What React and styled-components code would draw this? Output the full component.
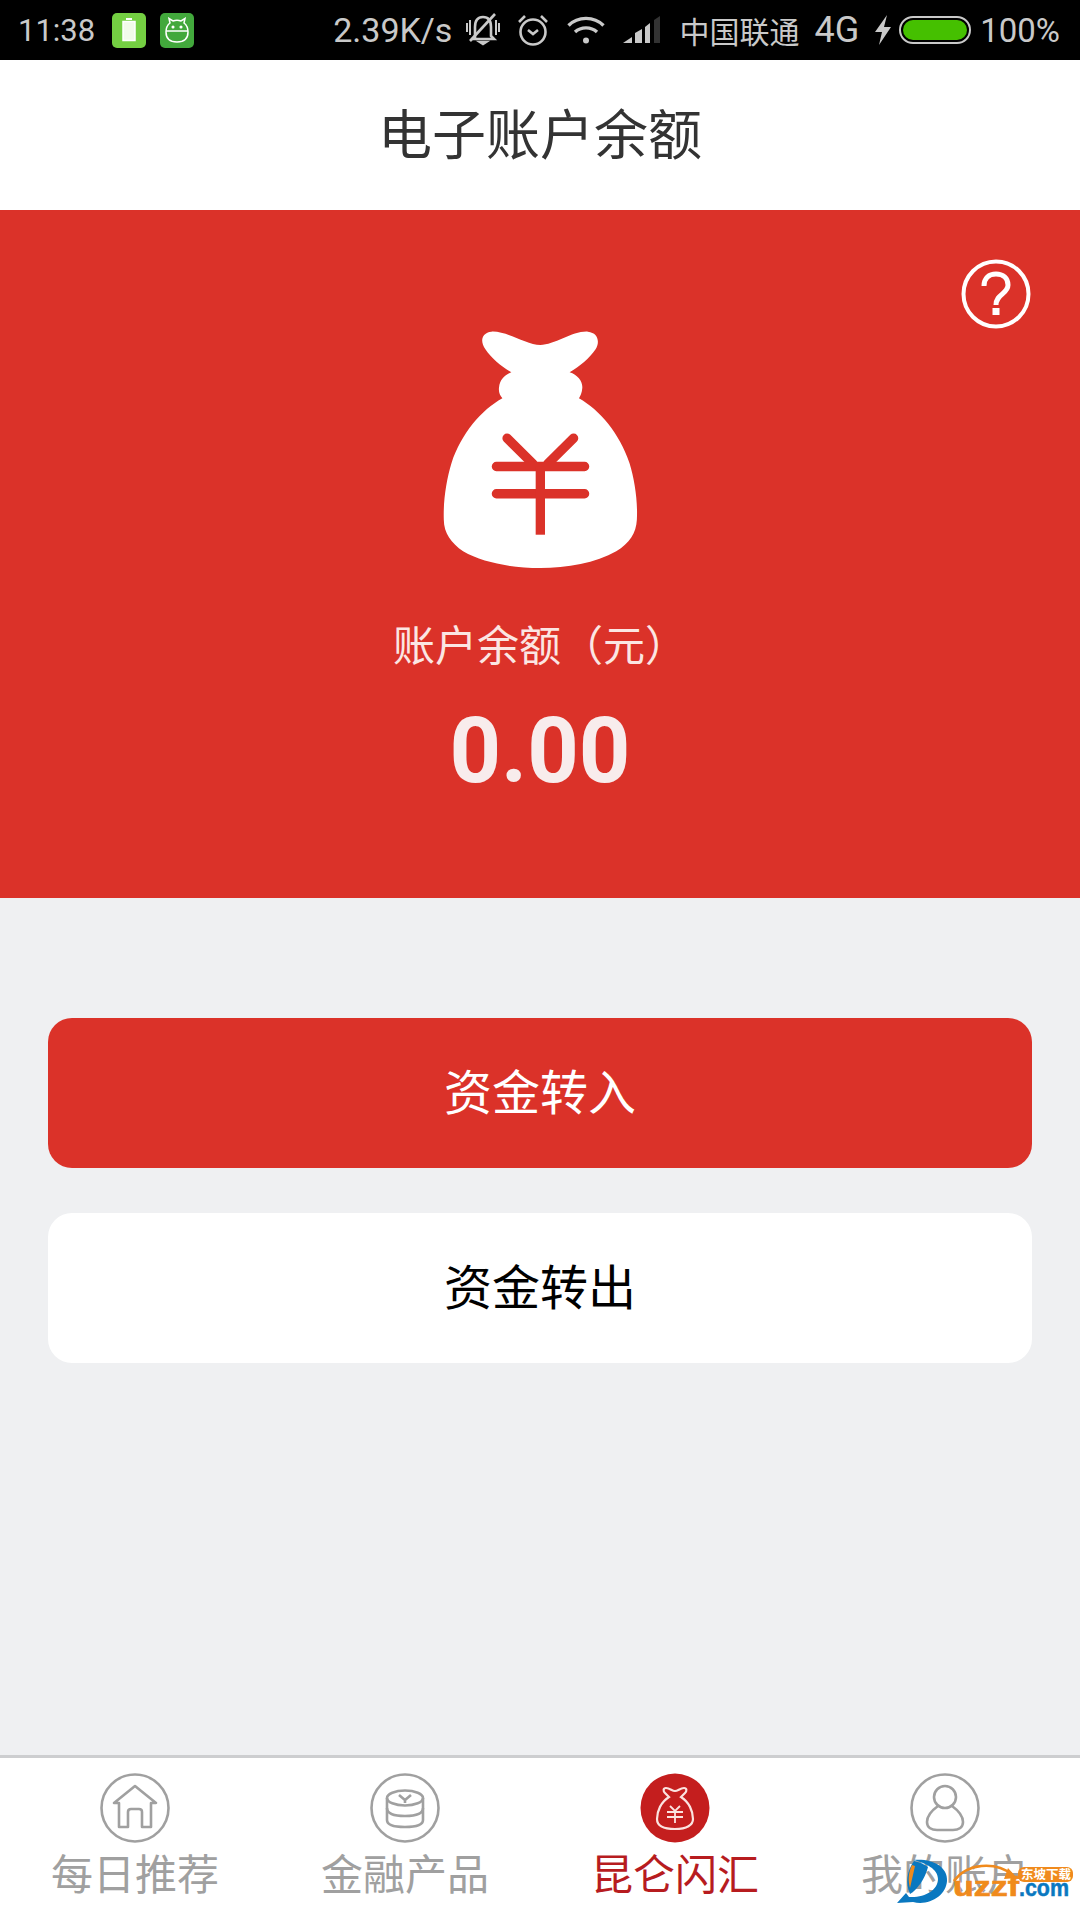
import React from "react";
import styled, { createGlobalStyle } from "styled-components";

const GlobalStyle = createGlobalStyle`
  html, body {
    margin: 0;
    padding: 0;
    background: #eff0f2;
    font-family: "Noto Sans CJK SC", "Roboto", sans-serif;
  }
  * { box-sizing: border-box; }
`;

const RED = "#db3229";
const GREY = "#a0a0a0";

const Page = styled.div`
  width: 1080px;
  height: 1920px;
  display: flex;
  flex-direction: column;
  position: relative;
  overflow: hidden;
  background: #eff0f2;
`;

/* status bar */
const StatusBar = styled.div`
  height: 60px;
  flex: none;
  background: #000;
  color: #c9c9c9;
  display: flex;
  align-items: center;
  padding-left: 18px;
  font-family: "Roboto", "Noto Sans CJK SC", sans-serif;
  font-weight: 400;
`;

const StatusText = styled.span`
  margin-left: ${(p) => p.$gap || 0}px;
  font-size: ${(p) => p.$size || 33}px;
  white-space: nowrap;
  line-height: 1;
`;

const CarrierText = styled(StatusText)`
  font-family: "Noto Sans CJK SC", sans-serif;
  font-size: 30px;
`;

const AppBadge = styled.div`
  width: 34px;
  height: 35px;
  margin-left: ${(p) => p.$gap}px;
  border-radius: 5px;
  background: ${(p) => p.$bg};
  display: flex;
  align-items: center;
  justify-content: center;
`;

const StatusIcon = styled.svg`
  flex: none;
  margin-left: ${(p) => p.$gap}px;
  display: block;
`;

/* title */
const Header = styled.header`
  height: 150px;
  flex: none;
  background: #fff;
  display: flex;
  align-items: center;
  justify-content: center;
  padding-bottom: 7px;
  font-size: 54px;
  color: #333;
`;

/* balance */
const Hero = styled.section`
  height: 688px;
  flex: none;
  background: ${RED};
  position: relative;
  display: flex;
  flex-direction: column;
  align-items: center;
  padding-top: 120px;
`;

const HelpButton = styled.svg`
  position: absolute;
  top: 49px;
  right: 49px;
`;

const BalanceLabel = styled.div`
  margin-top: 52px;
  font-size: 42px;
  line-height: 46px;
  color: #fbe6e3;
`;

const BalanceValue = styled.div`
  margin-top: 33px;
  font-family: "Roboto", sans-serif;
  font-weight: 700;
  font-size: 90px;
  line-height: 106px;
  color: #f8ecec;
`;

/* actions */
const Actions = styled.main`
  flex: 1;
  display: flex;
  flex-direction: column;
  gap: 45px;
  padding: 120px 48px 0;
`;

const ActionButton = styled.button`
  height: 150px;
  border: 0;
  border-radius: 24px;
  padding: 0 0 9px;
  font-family: inherit;
  font-size: 48px;
  background: ${(p) => (p.$primary ? RED : "#fff")};
  color: ${(p) => (p.$primary ? "#fff" : "#000")};
`;

/* bottom tabs */
const TabBar = styled.nav`
  height: 165px;
  flex: none;
  background: #fff;
  border-top: 3px solid #cdced0;
  display: grid;
  grid-template-columns: repeat(4, 1fr);
  padding-top: 15px;
`;

const Tab = styled.div`
  display: flex;
  flex-direction: column;
  align-items: center;
  color: ${(p) => (p.$active ? "#b71c1f" : GREY)};
`;

const TabLabel = styled.span`
  margin-top: 5px;
  font-size: 42px;
  line-height: 48px;
`;

const Watermark = styled.svg`
  position: absolute;
  left: 895px;
  top: 1855px;
`;

const BAG_PATH =
  "M215 65C260 62 320 105 362 105C405 105 460 62 505 65C535 68 542 95 528 118C510 145 480 170 450 187C475 195 490 215 488 235C487 250 482 258 478 265C540 300 600 370 630 460C645 510 655 570 652 630C650 670 630 700 590 725C530 760 440 775 362 775C280 775 190 760 130 725C95 700 72 670 72 630C70 570 80 510 95 460C125 370 185 300 248 265C240 255 236 245 238 232C240 210 255 195 275 187C245 170 215 145 197 118C180 95 185 68 215 65Z";

const BagIcon = () => (
  <svg width="195" height="238" viewBox="70 60 585 715">
    <path d={BAG_PATH} fill="#fff" />
    <g fill="none" stroke={RED} strokeWidth="28" strokeLinecap="round">
      <path d="M262 385L340 462M462 385L384 462" />
      <path d="M230 470H495M230 552H495" />
    </g>
    <path d="M362 470V675" stroke={RED} strokeWidth="28" fill="none" />
  </svg>
);

const TabCircle = ({ children, filled }) => (
  <svg width="70" height="70" viewBox="-35 -35 70 70">
    <circle
      cx="0"
      cy="0"
      r={filled ? 34.5 : 33.5}
      fill={filled ? "#c41e1e" : "none"}
      stroke={filled ? "none" : GREY}
      strokeWidth="2.6"
    />
    <g fill="none" stroke={filled ? "#fbe3e0" : GREY} strokeWidth="2.6">
      {children}
    </g>
  </svg>
);

const HomeGlyph = () => (
  <path d="M-21-5L0-22L21-5H16V19H7V4Q7 1 4 1H-4Q-7 1-7 4V19H-16V-5Z" strokeLinejoin="round" />
);

const CoinsGlyph = () => (
  <>
    <ellipse cx="0" cy="-10" rx="18" ry="7.5" />
    <path d="M-18-10V12Q-18 19 0 19Q18 19 18 12V-10" />
    <path d="M-18 0Q-18 8 0 8Q18 8 18 0" />
    <path d="M-6-13L0-8L6-13M0-8V-5" />
  </>
);

const MoneyGlyph = () => (
  <>
    <path
      d="M-9-20C-5-20-3-17 0-17C3-17 5-20 9-20C12-20 12-17 10-15L6-11C14-6 18 3 18 11C18 17 12 21 0 21C-12 21-18 17-18 11C-18 3-14-6-6-11L-10-15C-12-17-12-20-9-20Z"
      strokeWidth="2.2"
    />
    <path d="M-5-2L0 3L5-2M-8 4H8M-8 9H8M0 3V15" strokeWidth="1.8" />
  </>
);

const UserGlyph = () => (
  <>
    <circle cx="0" cy="-11" r="11" />
    <path d="M-7-2C-14 3-18 8-18 14C-18 20-13 22-8 22H8C13 22 18 20 18 14C18 8 14 3 7-2" />
  </>
);

const TABS = [
  { label: "每日推荐", glyph: <HomeGlyph /> },
  { label: "金融产品", glyph: <CoinsGlyph /> },
  { label: "昆仑闪汇", glyph: <MoneyGlyph />, active: true },
  { label: "我的账户", glyph: <UserGlyph /> },
];

const App = () => (
  <Page>
    <GlobalStyle />
    <StatusBar>
      <StatusText $size={31}>11:38</StatusText>
      <AppBadge $gap={17} $bg="#74cf42">
        <svg width="14" height="24" viewBox="0 0 14 24">
          <path d="M4 1H10" stroke="#fff" strokeWidth="2" />
          <rect x="1" y="3.5" width="12" height="19" fill="#f2fbe9" stroke="#fff" strokeWidth="1.5" />
        </svg>
      </AppBadge>
      <AppBadge $gap={14} $bg="#42a83c">
        <svg width="24" height="26" viewBox="0 0 24 26" fill="none" stroke="#fff" strokeWidth="1.5">
          <path d="M5 6L4 1.5L8 4Q12 2.5 16 4L20 1.5L19 6Q23 9 23 15Q23 25 12 25Q1 25 1 15Q1 9 5 6Z" />
          <path d="M1 14H23" />
          <circle cx="8" cy="10" r="0.8" fill="#fff" />
          <circle cx="16" cy="10" r="0.8" fill="#fff" />
        </svg>
      </AppBadge>
      <StatusText $gap={139} $size={34}>2.39K/s</StatusText>
      <StatusIcon $gap={14} width="34" height="34" viewBox="0 0 34 34" fill="none" stroke="#c9c9c9" strokeWidth="2.6">
        <path d="M9 26V14Q9 4 17 4Q25 4 25 14V23L28 26H6" />
        <path d="M29 1L4 28" />
        <path d="M1 10V19M4 7V22M30 7V22M33 10V19" strokeWidth="2" />
        <path d="M14 29H20L17 31Z" fill="#c9c9c9" />
      </StatusIcon>
      <StatusIcon $gap={17} width="32" height="32" viewBox="0 0 32 32" fill="none" stroke="#c9c9c9" strokeWidth="2.6">
        <circle cx="16" cy="18" r="12.5" />
        <path d="M11 16L16 20L21 16" />
        <path d="M2 8L8 2M24 2L30 8" />
      </StatusIcon>
      <StatusIcon $gap={18} width="38" height="30" viewBox="0 0 38 30" fill="none" stroke="#c9c9c9" strokeWidth="3.4">
        <path d="M1.5 10.5C11 1 27 1 36.5 10.5" />
        <path d="M8 17C14 11.5 24 11.5 30 17" />
        <circle cx="19" cy="25.5" r="3" fill="#c9c9c9" stroke="none" />
      </StatusIcon>
      <StatusIcon $gap={18} width="37" height="28" viewBox="0 0 37 28">
        <path d="M0 27L9 21V27Z" fill="#c9c9c9" />
        <path d="M12 27V17L19 13V27Z" fill="#c9c9c9" />
        <path d="M22 27V11L27 7V27Z" fill="#c9c9c9" />
        <path d="M31 27V4L37 0V27Z" fill="#333" />
      </StatusIcon>
      <CarrierText $gap={19}>中国联通</CarrierText>
      <StatusText $gap={15} $size={36}>4G</StatusText>
      <StatusIcon $gap={16} width="16" height="30" viewBox="0 0 16 30">
        <path d="M12 0L0 17H7L4 30L16 12H9Z" fill="#c9c9c9" />
      </StatusIcon>
      <StatusIcon $gap={8} width="72" height="28" viewBox="0 0 72 28">
        <rect x="1" y="1" width="70" height="26" rx="13" fill="none" stroke="#c9c9c9" strokeWidth="2" />
        <rect x="4" y="4" width="64" height="20" rx="10" fill="#45c000" />
      </StatusIcon>
      <StatusText $gap={9}>100%</StatusText>
    </StatusBar>

    <Header>电子账户余额</Header>

    <Hero>
      <HelpButton width="70" height="70" viewBox="0 0 70 70" fill="none" stroke="#fff" strokeWidth="4">
        <circle cx="35" cy="35" r="32.5" />
        <path d="M23 27C23 19 28 15 35 15C42 15 47 19 47 26C47 35 35 35 35 46" strokeWidth="5" />
        <rect x="31.5" y="49" width="7" height="7" fill="#fff" stroke="none" />
      </HelpButton>
      <BagIcon />
      <BalanceLabel>账户余额（元）</BalanceLabel>
      <BalanceValue>0.00</BalanceValue>
    </Hero>

    <Actions>
      <ActionButton $primary>资金转入</ActionButton>
      <ActionButton>资金转出</ActionButton>
    </Actions>

    <TabBar>
      {TABS.map((tab) => (
        <Tab key={tab.label} $active={tab.active}>
          <TabCircle filled={tab.active}>{tab.glyph}</TabCircle>
          <TabLabel>{tab.label}</TabLabel>
        </Tab>
      ))}
    </TabBar>

    <Watermark width="185" height="55" viewBox="0 0 185 55">
      <path d="M18 5C36 3 53 11 52 26C51 41 34 51 18 47L2 48L11 38L14 42C30 43 43 35 43 24C43 14 31 8 18 5Z" fill="#0a78c0" />
      <path d="M19 6C12 16 10 28 15 39C22 35 30 24 33 12C29 9 24 7 19 6Z" fill="#0a78c0" />
      <path d="M17 10C13 18 13 26 15 33L20 11Z" fill="#f08a1c" />
      <path d="M59 26C72 8 100 6 118 20" fill="none" stroke="#f08a1c" strokeWidth="2.5" />
      <path d="M113 13L122 23L109 24Z" fill="#f08a1c" />
      <text x="58" y="41" textLength="66" lengthAdjust="spacingAndGlyphs" fontFamily="Liberation Sans, sans-serif" fontWeight="700" fontSize="28" stroke="#f08a1c" strokeWidth="0.7" fill="#f08a1c">uzzf</text>
      <text x="124" y="41" textLength="50" lengthAdjust="spacingAndGlyphs" fontFamily="Liberation Sans, sans-serif" fontWeight="700" fontSize="24" stroke="#0a78c0" strokeWidth="0.5" fill="#0a78c0">.com</text>
      <rect x="123" y="12" width="55" height="15" rx="6" fill="#f08a1c" />
      <text x="126" y="24" fontFamily="Noto Sans CJK SC, sans-serif" fontWeight="700" fontSize="12.5" fill="#fff">东坡下载</text>
    </Watermark>
  </Page>
);

export default App;
